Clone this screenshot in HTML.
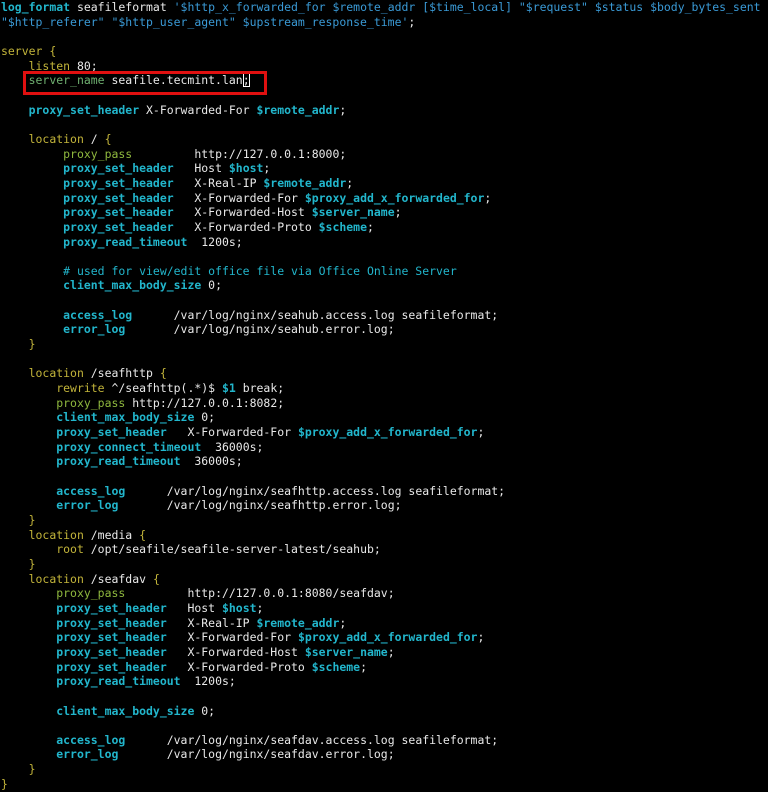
<!DOCTYPE html>
<html><head><meta charset="utf-8"><style>
html,body{margin:0;padding:0;background:#000;width:768px;height:792px;overflow:hidden}
pre{margin:0;padding:0 0 0 1px;font-family:"DejaVu Sans Mono","Liberation Mono",monospace;font-size:11.47px;line-height:14.66px;color:#e8e8e8;white-space:pre}
.k{color:#c2b43a}
.g{color:#8fb83e}
.sn{color:#6fb070}
.c{color:#22b6cc;font-weight:bold}
.cm{color:#22b6cc}
.s{color:#3a9ad6}
.box{position:absolute;left:23px;top:71px;width:238px;height:18px;border:3px solid #e01010}
.cur{outline:1px solid #fff;outline-offset:-1px}
</style></head><body>
<div class="box"></div>
<pre><span class="c">log_format</span> seafileformat <span class="s">'$http_x_forwarded_for $remote_addr [$time_local] "$request" $status $body_bytes_sent
"$http_referer" "$http_user_agent" $upstream_response_time'</span>;

<span class="k">server</span> <span class="k">{</span>
    <span class="k">listen</span> 80;
    <span class="sn">server_name</span> seafile.tecmint.lan<span class="cur">;</span>

    <span class="c">proxy_set_header</span> X-Forwarded-For <span class="c">$remote_addr</span>;

    <span class="k">location</span> / <span class="k">{</span>
         <span class="g">proxy_pass</span>         http://127.0.0.1:8000;
         <span class="c">proxy_set_header</span>   Host <span class="c">$host</span>;
         <span class="c">proxy_set_header</span>   X-Real-IP <span class="c">$remote_addr</span>;
         <span class="c">proxy_set_header</span>   X-Forwarded-For <span class="c">$proxy_add_x_forwarded_for</span>;
         <span class="c">proxy_set_header</span>   X-Forwarded-Host <span class="c">$server_name</span>;
         <span class="c">proxy_set_header</span>   X-Forwarded-Proto <span class="c">$scheme</span>;
         <span class="c">proxy_read_timeout</span>  1200s;

         <span class="cm"># used for view/edit office file via Office Online Server</span>
         <span class="c">client_max_body_size</span> 0;

         <span class="c">access_log</span>      /var/log/nginx/seahub.access.log seafileformat;
         <span class="c">error_log</span>       /var/log/nginx/seahub.error.log;
    <span class="k">}</span>

    <span class="k">location</span> /seafhttp <span class="k">{</span>
        <span class="k">rewrite</span> ^/seafhttp(.*)$ <span class="c">$1</span> break;
        <span class="g">proxy_pass</span> http://127.0.0.1:8082;
        <span class="c">client_max_body_size</span> 0;
        <span class="c">proxy_set_header</span>   X-Forwarded-For <span class="c">$proxy_add_x_forwarded_for</span>;
        <span class="c">proxy_connect_timeout</span>  36000s;
        <span class="c">proxy_read_timeout</span>  36000s;

        <span class="c">access_log</span>      /var/log/nginx/seafhttp.access.log seafileformat;
        <span class="c">error_log</span>       /var/log/nginx/seafhttp.error.log;
    <span class="k">}</span>
    <span class="k">location</span> /media <span class="k">{</span>
        <span class="k">root</span> /opt/seafile/seafile-server-latest/seahub;
    <span class="k">}</span>
    <span class="k">location</span> /seafdav <span class="k">{</span>
        <span class="g">proxy_pass</span>         http://127.0.0.1:8080/seafdav;
        <span class="c">proxy_set_header</span>   Host <span class="c">$host</span>;
        <span class="c">proxy_set_header</span>   X-Real-IP <span class="c">$remote_addr</span>;
        <span class="c">proxy_set_header</span>   X-Forwarded-For <span class="c">$proxy_add_x_forwarded_for</span>;
        <span class="c">proxy_set_header</span>   X-Forwarded-Host <span class="c">$server_name</span>;
        <span class="c">proxy_set_header</span>   X-Forwarded-Proto <span class="c">$scheme</span>;
        <span class="c">proxy_read_timeout</span>  1200s;

        <span class="c">client_max_body_size</span> 0;

        <span class="c">access_log</span>      /var/log/nginx/seafdav.access.log seafileformat;
        <span class="c">error_log</span>       /var/log/nginx/seafdav.error.log;
    <span class="k">}</span>
<span class="k">}</span></pre>
</body></html>
